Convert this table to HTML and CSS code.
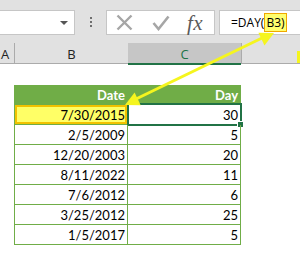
FILE: index.html
```html
<!DOCTYPE html>
<html>
<head>
<meta charset="utf-8">
<link rel="stylesheet" href="styles.css">
</head>
<body>
<div class="page">
  <div class="fbar">
    <div class="namebox"><span class="dd"></span></div>
    <div class="dots"><i></i><i></i><i></i></div>
    <div class="fbtns">
      <svg class="ic-x" width="17" height="17" viewBox="0 0 17 17"><path d="M1.5 1.5 L15.5 15.5 M15.5 1.5 L1.5 15.5" stroke="#a6a6a6" stroke-width="2.4" fill="none"/></svg>
      <svg class="ic-ok" width="18" height="16" viewBox="0 0 18 16"><path d="M1.5 8 L6.5 14 L16.5 1.5" stroke="#a6a6a6" stroke-width="2.6" fill="none"/></svg>
      <span class="fx">fx</span>
    </div>
    <div class="finput">=DAY(<span class="ref">B3)</span></div>
  </div>
  <div class="colheads">
    <div class="ch ch-a">A</div>
    <div class="ch ch-b">B</div>
    <div class="ch ch-c">C</div>
    <div class="ch ch-d"></div>
  </div>
  <div class="sheet">
    <div class="grid">
      <div class="cell hd">Date</div><div class="cell hd">Day</div>
      <div class="cell b3">7/30/2015</div><div class="cell c3">30<span class="sel"></span><span class="handle"></span></div>
      <div class="cell">2/5/2009</div><div class="cell">5</div>
      <div class="cell">12/20/2003</div><div class="cell">20</div>
      <div class="cell">8/11/2022</div><div class="cell">11</div>
      <div class="cell">7/6/2012</div><div class="cell">6</div>
      <div class="cell">3/25/2012</div><div class="cell">25</div>
      <div class="cell">1/5/2017</div><div class="cell">5</div>
    </div>
  </div>
  <svg class="arrow" width="300" height="264" viewBox="0 0 300 264">
    <line x1="136" y1="99" x2="262" y2="38" stroke="#f5f51e" stroke-width="3"/>
    <polygon points="125,105 140.7,105.2 134.6,92.6" fill="#f5f51e"/>
    <polygon points="274,33 258.4,32.8 264.5,45.4" fill="#f5f51e"/>
    <rect x="297" y="51" width="3" height="12" fill="#f5f51e"/>
  </svg>
</div>
</body>
</html>
```
FILE: styles.css
```css
html, body {
  margin: 0;
  padding: 0;
  background: #ffffff;
}
.page {
  position: relative;
  width: 300px;
  height: 264px;
  overflow: hidden;
  background: #ffffff;
  font-family: "Open Sans", "Liberation Sans", sans-serif;
}
.fbar {
  height: 43px;
  box-sizing: border-box;
  padding-top: 10px;
  background: #e1e1e1;
  display: flex;
  align-items: flex-start;
}
.namebox {
  width: 75px;
  height: 25px;
  box-sizing: border-box;
  background: #fff;
  border: 1px solid #c6c6c6;
  border-left: 0;
  display: flex;
  justify-content: flex-end;
  align-items: center;
  padding-right: 6px;
}
.dd {
  width: 0;
  height: 0;
  border-left: 4px solid transparent;
  border-right: 4px solid transparent;
  border-top: 4px solid #555;
}
.dots {
  width: 31px;
  display: flex;
  flex-direction: column;
  align-items: center;
  gap: 2px;
  padding-top: 7px;
}
.dots i {
  display: block;
  width: 2px;
  height: 2px;
  background: #6e6e6e;
}
.fbtns {
  width: 109px;
  height: 25px;
  box-sizing: border-box;
  background: #fff;
  border: 1px solid #c6c6c6;
  display: flex;
  align-items: center;
  padding-left: 9px;
}
.ic-x { margin-right: 19px; }
.ic-ok { margin-right: 17px; }
.fx {
  font-family: "Liberation Serif", serif;
  font-style: italic;
  font-size: 21px;
  line-height: 20px;
  color: #5a5a5a;
  letter-spacing: 0.5px;
}
.finput {
  flex: 1;
  margin-left: 4px;
  height: 25px;
  box-sizing: border-box;
  background: #fff;
  border: 1px solid #c6c6c6;
  border-right: 0;
  padding-left: 11px;
  font-size: 12px;
  line-height: 23px;
  color: #000;
  white-space: nowrap;
}
.ref {
  display: inline-block;
  background: #ffff6e;
  border: 1px solid #f0a800;
  line-height: 17px;
  padding: 0 1px;
}
.colheads {
  height: 21px;
  box-sizing: border-box;
  background: #e1e1e1;
  border-bottom: 1px solid #ababab;
  display: flex;
  font-size: 13px;
  line-height: 22px;
  color: #222;
}
.ch {
  box-sizing: border-box;
  height: 20px;
  text-align: center;
}
.ch-a { width: 15px; border-right: 1px solid #ababab; padding-right: 4px; }
.ch-b { width: 113px; }
.ch-c {
  width: 113px;
  background: #c6c6c6;
  color: #217346;
  border-bottom: 2px solid #217346;
  height: 22px;
}
.ch-d { flex: 1; border-left: 1px solid #ababab; }
.sheet {
  padding-top: 21px;
  padding-left: 14px;
}
.grid {
  display: grid;
  grid-template-columns: 114px 113px;
  width: 227px;
  font-family: Lato, "Open Sans", sans-serif;
  font-size: 13px;
  color: #000;
}
.cell {
  position: relative;
  box-sizing: border-box;
  height: 20px;
  border-right: 1px solid #70ad47;
  border-bottom: 1px solid #70ad47;
  text-align: right;
  padding-right: 2px;
  line-height: 21px;
}
.cell:nth-child(odd) { border-left: 1px solid #70ad47; }
.hd {
  background: #70ad47;
  color: #fff;
  font-weight: bold;
}
.b3 {
  background: #ffff66;
  box-shadow: inset 0 0 0 2px #f2c200;
}
.sel {
  position: absolute;
  left: -1px;
  top: -2px;
  right: -2px;
  bottom: -2px;
  border: 2px solid #217346;
}
.handle {
  position: absolute;
  right: -4px;
  bottom: -4px;
  width: 5px;
  height: 5px;
  background: #217346;
  border: 1px solid #fff;
}
.arrow {
  position: absolute;
  left: 0;
  top: 0;
  pointer-events: none;
}
```
